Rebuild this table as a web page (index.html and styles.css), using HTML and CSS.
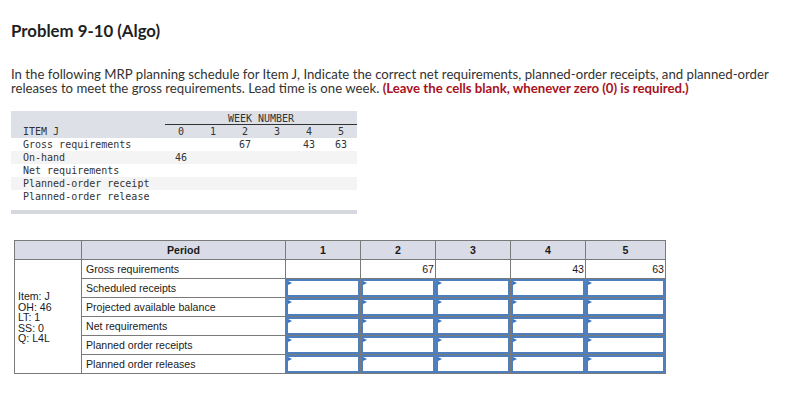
FILE: index.html
```html
<!DOCTYPE html>
<html>
<head>
<meta charset="utf-8">
<link rel="stylesheet" href="styles.css">
</head>
<body>
<div class="page">
  <h1 class="title">Problem 9-10 (Algo)</h1>
  <p class="intro">In the following MRP planning schedule for Item J, Indicate the correct net requirements, planned-order receipts, and planned-order releases to meet the gross requirements. Lead time is one week. <span class="warn">(Leave the cells blank, whenever zero (0) is required.)</span></p>

  <div class="mrp">
    <div class="mrp-head">
      <div class="mrp-row">
        <div class="mrp-lbl"></div>
        <div class="wk-title">WEEK NUMBER</div>
      </div>
      <div class="mrp-row">
        <div class="mrp-lbl">ITEM J</div>
        <div class="c">0</div><div class="c">1</div><div class="c">2</div><div class="c">3</div><div class="c">4</div><div class="c">5</div>
      </div>
    </div>
    <div class="mrp-row">
      <div class="mrp-lbl">Gross requirements</div>
      <div class="c"></div><div class="c"></div><div class="c">67</div><div class="c"></div><div class="c">43</div><div class="c">63</div>
    </div>
    <div class="mrp-row alt">
      <div class="mrp-lbl">On-hand</div>
      <div class="c">46</div><div class="c"></div><div class="c"></div><div class="c"></div><div class="c"></div><div class="c"></div>
    </div>
    <div class="mrp-row">
      <div class="mrp-lbl">Net requirements</div>
    </div>
    <div class="mrp-row alt">
      <div class="mrp-lbl">Planned-order receipt</div>
    </div>
    <div class="mrp-row">
      <div class="mrp-lbl">Planned-order release</div>
    </div>
    <div class="mrp-foot"></div>
  </div>

  <table class="grid">
    <colgroup>
      <col class="w-item"><col class="w-period"><col class="w-n"><col class="w-n"><col class="w-n"><col class="w-n"><col class="w-n5">
    </colgroup>
    <thead>
      <tr>
        <th></th><th>Period</th><th>1</th><th>2</th><th>3</th><th>4</th><th>5</th>
      </tr>
    </thead>
    <tbody>
      <tr>
        <td class="item" rowspan="6">Item: J<br>OH: 46<br>LT: 1<br>SS: 0<br>Q: L4L</td>
        <td class="lab">Gross requirements</td>
        <td class="num"></td><td class="num">67</td><td class="num"></td><td class="num">43</td><td class="num">63</td>
      </tr>
      <tr>
        <td class="lab">Scheduled receipts</td>
        <td class="in"><div class="box"><input type="text"><span class="tri"></span></div></td>
        <td class="in"><div class="box"><input type="text"><span class="tri"></span></div></td>
        <td class="in"><div class="box"><input type="text"><span class="tri"></span></div></td>
        <td class="in"><div class="box"><input type="text"><span class="tri"></span></div></td>
        <td class="in"><div class="box"><input type="text"><span class="tri"></span></div></td>
      </tr>
      <tr>
        <td class="lab">Projected available balance</td>
        <td class="in"><div class="box"><input type="text"><span class="tri"></span></div></td>
        <td class="in"><div class="box"><input type="text"><span class="tri"></span></div></td>
        <td class="in"><div class="box"><input type="text"><span class="tri"></span></div></td>
        <td class="in"><div class="box"><input type="text"><span class="tri"></span></div></td>
        <td class="in"><div class="box"><input type="text"><span class="tri"></span></div></td>
      </tr>
      <tr>
        <td class="lab">Net requirements</td>
        <td class="in"><div class="box"><input type="text"><span class="tri"></span></div></td>
        <td class="in"><div class="box"><input type="text"><span class="tri"></span></div></td>
        <td class="in"><div class="box"><input type="text"><span class="tri"></span></div></td>
        <td class="in"><div class="box"><input type="text"><span class="tri"></span></div></td>
        <td class="in"><div class="box"><input type="text"><span class="tri"></span></div></td>
      </tr>
      <tr>
        <td class="lab">Planned order receipts</td>
        <td class="in"><div class="box"><input type="text"><span class="tri"></span></div></td>
        <td class="in"><div class="box"><input type="text"><span class="tri"></span></div></td>
        <td class="in"><div class="box"><input type="text"><span class="tri"></span></div></td>
        <td class="in"><div class="box"><input type="text"><span class="tri"></span></div></td>
        <td class="in"><div class="box"><input type="text"><span class="tri"></span></div></td>
      </tr>
      <tr>
        <td class="lab">Planned order releases</td>
        <td class="in"><div class="box"><input type="text"><span class="tri"></span></div></td>
        <td class="in"><div class="box"><input type="text"><span class="tri"></span></div></td>
        <td class="in"><div class="box"><input type="text"><span class="tri"></span></div></td>
        <td class="in"><div class="box"><input type="text"><span class="tri"></span></div></td>
        <td class="in"><div class="box"><input type="text"><span class="tri"></span></div></td>
      </tr>
    </tbody>
  </table>
</div>
</body>
</html>
```

FILE: styles.css
```css
* { box-sizing: border-box; }
html, body { margin: 0; padding: 0; background: #fff; }
body { font-family: Lato, "Open Sans", sans-serif; color: #2b2b2b; }

.page { padding: 21px 0 0 11px; }

.title {
  margin: 0;
  font-size: 16.8px;
  line-height: 20px;
  font-weight: 700;
  color: #1f1f1f;
}

.intro {
  margin: 26px 0 0 0;
  font-size: 13.2px;
  line-height: 14px;
  color: #333;
  width: 785px;
}
.warn { color: #a8121d; font-weight: 700; }

/* MRP image-like table */
.mrp {
  margin-top: 16px;
  width: 346px;
  font-family: "DejaVu Sans Mono", "Liberation Mono", monospace;
  font-size: 10px;
  color: #333;
}
.mrp-head { background: #dde0e7; padding-top: 2px; }
.mrp-row {
  display: grid;
  grid-template-columns: 154px repeat(6, 32px);
  height: 13px;
  line-height: 13px;
}
.mrp-head .mrp-row:first-child { height: 12px; line-height: 11px; }
.mrp-row.alt { background: #f4f4f4; }
.mrp-lbl { padding-left: 12px; white-space: nowrap; }
.wk-title {
  grid-column: 2 / 8;
  text-align: center;
  border-bottom: 1px solid #333;
}
.c { text-align: center; }
.mrp-foot { height: 4px; background: #d5d8df; margin-top: 7px; }

/* Answer grid */
.grid {
  margin: 26px 0 0 3px;
  border-collapse: collapse;
  table-layout: fixed;
  width: 651px;
  font-family: "Liberation Sans", Arial, sans-serif;
  font-size: 10.6px;
  color: #1a1a1a;
}
.w-item { width: 67px; }
.w-period { width: 204px; }
.w-n { width: 75px; }
.w-n5 { width: 80px; }
.grid th, .grid td { border: 1px solid #7a7a7a; padding: 0; }
.grid th {
  background: #d9dce6;
  height: 19px;
  font-weight: 700;
  text-align: center;
}
.grid td { height: 19px; }
.grid td.item { vertical-align: middle; padding-left: 3px; line-height: 10.6px; padding-top: 2px; }
.grid td.lab { padding-left: 4px; }
.grid td.num { text-align: right; padding-right: 1px; }
.grid td.in { padding: 0; }
.box { position: relative; height: 18px; }
.box input {
  display: block;
  width: 100%;
  height: 18px;
  margin: 0;
  padding: 0 4px;
  border: 2px solid #4d7ebd;
  background: #fff;
  font: inherit;
  outline: none;
}
.tri {
  position: absolute;
  left: 2px;
  top: 2px;
  width: 0;
  height: 0;
  border-top: 2.5px solid transparent;
  border-bottom: 2.5px solid transparent;
  border-left: 4px solid #3a72c2;
}
```
